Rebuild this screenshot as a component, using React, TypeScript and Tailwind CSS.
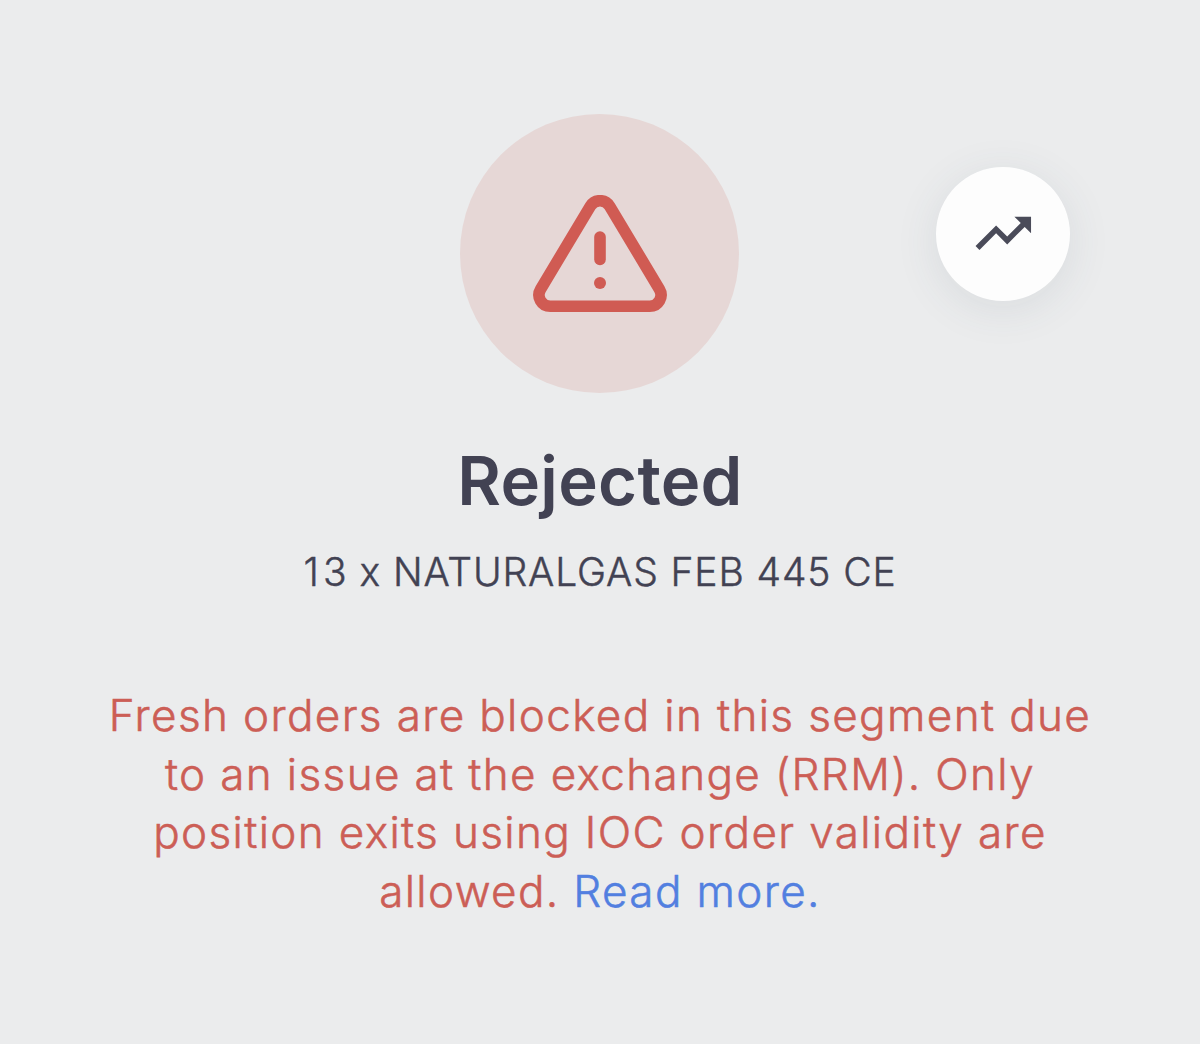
export default function App() {
  return (
    <main className="flex h-[1044px] w-[1200px] flex-col items-center bg-[#ebeced] pt-[114px] text-center font-['Inter',sans-serif]">
      <header className="relative flex w-full justify-center pr-px">
        <div className="flex size-[279px] items-center justify-center rounded-full bg-[#e6d7d6] pl-px">
          <svg width="134" height="118" viewBox="533 195 134 118" fill="none" stroke="#d05b53" strokeWidth="11.6" strokeLinecap="round" strokeLinejoin="round">
            <path d="M590.3 206.2 L540.6 289.2 A11.3 11.3 0 0 0 550.3 306.3 H649.7 A11.3 11.3 0 0 0 659.4 289.2 L609.7 206.2 A11.3 11.3 0 0 0 590.3 206.2 Z" />
            <path d="M600 237 V259.5" />
            <circle cx="600" cy="283" r="6" fill="#d05b53" stroke="none" />
          </svg>
        </div>
        <button aria-label="Open chart" className="absolute top-[52.5px] right-[130px] flex size-[134px] items-center justify-center rounded-full bg-[#fdfdfd] shadow-[0_8px_44px_rgba(60,80,100,0.10)]">
          <svg className="size-[66.6px]" viewBox="0 0 24 24" fill="#4a4b59">
            <path d="M16 6l2.29 2.29-4.88 4.88-4-4L2 16.59 3.41 18l6-6 4 4 6.3-6.29L22 12V6z" />
          </svg>
        </button>
      </header>
      <h1 className="mt-[46px] text-[67px] leading-[84px] font-semibold tracking-[0.3px] text-[#424253]">Rejected</h1>
      <p className="mt-[25px] text-[39px] leading-[48px] font-light tracking-[0.88px] whitespace-nowrap text-[#424253] [-webkit-text-stroke:0.45px_currentColor]"><span className="tracking-[4.3px]">1</span>3 x NATURALGAS FEB 445 CE</p>
      <p className="mt-[90px] text-[44px] leading-[58.5px] font-light tracking-[1.37px] whitespace-nowrap text-[#cc5e56] [-webkit-text-stroke:0.55px_currentColor]">
        Fresh orders are blocked in this segment due<br />
        to an issue at the exchange (RRM). Only<br />
        position exits using IOC order validity are<br />
        allowed. <a className="text-[#527fe0]">Read more.</a>
      </p>
    </main>
  );
}
